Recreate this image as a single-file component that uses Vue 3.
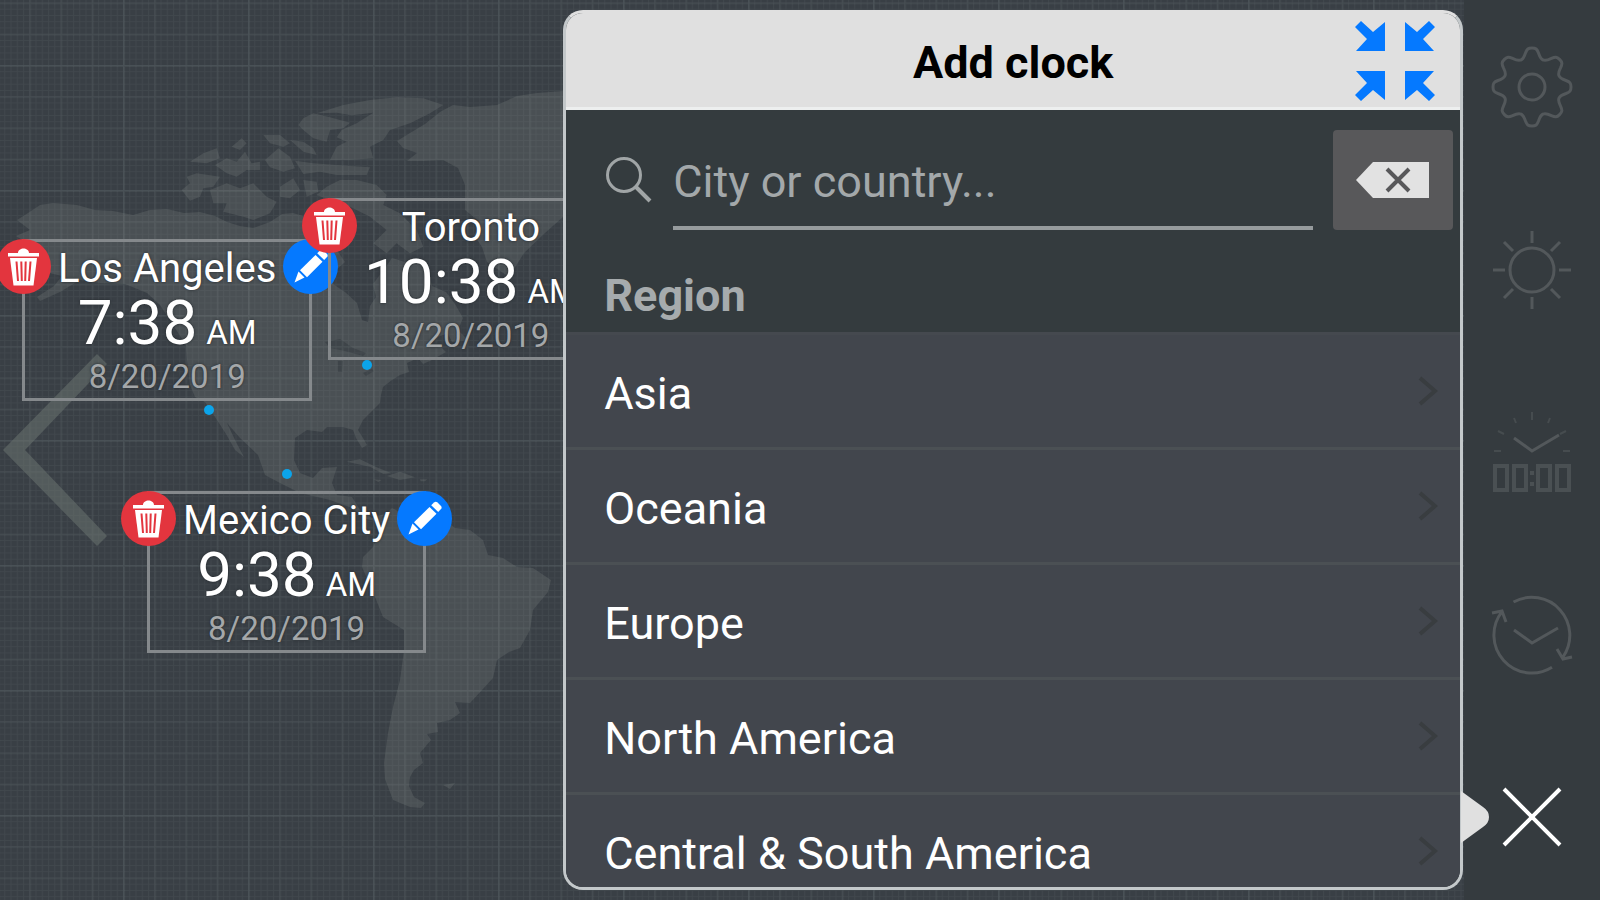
<script setup>
import { ref } from 'vue'

const query = ref('')

const clocks = [
  { city: 'Los Angeles', time: '7:38', left: 22, top: 239 },
  { city: 'Toronto', time: '10:38', left: 328, top: 198 },
  { city: 'Mexico City', time: '9:38', left: 147, top: 491 },
]

const pins = [
  [209, 410],
  [367, 365],
  [287, 474],
]

const regions = ['Asia', 'Oceania', 'Europe', 'North America', 'Central & South America']

function rotate(x, y, turn) {
  const a = (turn * Math.PI) / 4
  const rx = 40 + x * Math.cos(a) - y * Math.sin(a)
  const ry = 40 + x * Math.sin(a) + y * Math.cos(a)
  return `${rx.toFixed(2)} ${ry.toFixed(2)}`
}

function gearOutline() {
  let d = `M${rotate(-11.2, -27, 0)}`
  for (let k = 0; k < 8; k++) {
    const p = (x, y) => rotate(x, y, k)
    d += `C${p(-8.5, -28)} ${p(-7.5, -31)} ${p(-6.5, -34)}`
    d += `C${p(-5, -38)} ${p(-4, -39)} ${p(0, -39)}`
    d += `C${p(4, -39)} ${p(5, -38)} ${p(6.5, -34)}`
    d += `C${p(7.5, -31)} ${p(8.5, -28)} ${p(11.2, -27)}`
  }
  return d + 'Z'
}
const gear = gearOutline()
</script>

<template>
  <div class="app">
    <main class="stage">
      <svg class="map" viewBox="0 0 1464 900" preserveAspectRatio="xMinYMin slice" aria-hidden="true">
        <defs>
          <pattern id="fine" x="-2" y="65" width="6.25" height="6.25" patternUnits="userSpaceOnUse">
            <path d="M.5 0V6.25M0 .5H6.25" class="line-fine" />
          </pattern>
          <pattern id="medium" x="-2" y="65" width="31.25" height="31.25" patternUnits="userSpaceOnUse">
            <path d="M1 0V31.25M0 1H31.25" class="line-medium" />
          </pattern>
          <pattern id="coarse" x="-2" y="65" width="125" height="125" patternUnits="userSpaceOnUse">
            <path d="M1 0V125M0 1H125" class="line-coarse" />
          </pattern>
        </defs>
        <g class="land">
          <path d="M17 220 28 213 40 205 53 203 77 205 95 210 113 211 133 215 150 210 167 209 184 213 200 212 215 216 227 222 240 226 253 228 270 222 282 214 293 213 303 216 318 226 330 240 345 262 336 270 333 284 345 292 357 303 362 320 368 322 370 306 376 297 373 284 385 268 392 258 405 262 418 258 428 270 432 286 446 292 455 304 463 318 458 330 440 336 426 344 440 346 446 352 432 360 423 364 418 358 407 363 409 372 400 375 392 380 383 387 381 395 380 403 370 413 363 420 358 430 363 438 367 445 362 448 356 438 353 430 343 427 327 427 322 432 307 430 295 438 294 460 300 473 313 478 322 468 337 467 332 483 337 495 352 497 360 510 372 518 384 514 380 522 366 519 352 508 330 500 300 493 280 483 265 475 258 455 240 438 227 423 236 442 244 457 235 450 226 434 217 420 205 402 195 397 190 385 187 360 186 345 175 328 160 305 147 293 125 284 100 283 80 280 60 292 40 301 37 297 54 286 62 276 45 272 36 262 24 258 30 245 16 236 30 230Z" />
          <path d="M380 520 392 508 400 512 410 506 425 515 442 517 455 528 470 530 483 540 488 555 503 558 517 567 533 568 551 580 548 592 533 610 530 630 520 648 509 652 497 660 493 678 482 690 470 703 455 702 460 713 450 720 437 723 438 732 427 734 431 740 420 753 423 763 414 770 410 777 409 786 414 797 425 803 421 808 410 807 393 800 385 779 384 763 388 733 393 707 400 680 404 650 404 630 383 617 373 592 362 567 363 557 373 547 379 534Z" />
          <path d="M440 112 453 105 470 107 497 105 517 96 537 93 563 91 620 90 620 190 563 217 545 233 524 253 509 277 487 262 482 247 474 235 480 222 465 210 465 185 458 168 443 160 423 161 407 161 417 153 403 148 397 141 410 133 425 124Z" />
          <g transform="translate(170 80) scale(.3333)">
            <path d="M440 100 520 75 600 60 680 52 760 55 820 75 780 100 720 130 660 150 640 180 600 200 610 235 540 240 480 240 500 200 530 185 500 172 515 150 560 130 610 98 545 106 500 98Z" />
            <path d="M400 115 430 100 480 112 540 128 520 145 480 150 470 185 430 175 400 150 385 135Z" />
            <path d="M375 242 430 250 500 255 600 262 590 285 500 285 450 275 400 282Z" />
            <path d="M280 165 330 165 360 190 340 200 300 190Z M360 180 400 185 430 205 440 225 400 215Z M185 200 215 175 230 190 210 210Z M60 245 100 220 140 205 150 235 110 250Z" />
            <path d="M135 255 170 235 200 245 225 215 245 250 270 245 270 270 230 270 200 290 170 280Z M285 240 325 205 360 230 375 265 340 275 300 262Z" />
            <path d="M35 330 60 310 50 290 80 280 150 290 130 320 100 325 90 350 60 362Z" />
            <path d="M120 330 170 310 210 325 250 310 290 350 320 365 300 400 250 420 220 410 160 395 170 370 130 370Z" />
            <path d="M330 320 370 295 390 330 360 355 330 350Z M400 300 440 305 445 335 410 350Z" />
            <path d="M470 320 510 300 560 300 620 315 650 345 640 375 690 400 740 450 760 500 720 520 680 490 650 520 610 490 650 450 600 410 540 380 480 360 440 345Z" />
          </g>
          <g transform="translate(170 280) scale(.3333)">
            <path d="M530 545 570 538 620 562 665 580 640 582 600 560Z M650 588 690 575 735 592 690 600Z M750 598 772 598 765 604 752 604Z M610 598 635 600 625 606Z" />
          </g>
          <path d="M443 785 455 783 450 789Z M443 324 458 330 468 340 452 342Z" />
        </g>
        <g class="water">
          <path d="M325 342 340 339 353 348 366 353 363 356 345 351 330 348Z M338 361 343 361 342 372 338 372Z M363 373 372 369 374 371 366 376Z" />
        </g>
        <rect width="1464" height="900" fill="url(#fine)" />
        <rect width="1464" height="900" fill="url(#medium)" />
        <rect width="1464" height="900" fill="url(#coarse)" />
        <circle v-for="([x, y], i) in pins" :key="i" :cx="x" :cy="y" r="5" class="pin" />
      </svg>

      <button class="previous" type="button" aria-label="Previous">
        <svg viewBox="0 0 104 192"><path d="M94 0 104 10 22 96 104 182 94 192 0 96Z" /></svg>
      </button>

      <article
        v-for="clock in clocks"
        :key="clock.city"
        class="clock"
        :style="{ left: clock.left + 'px', top: clock.top + 'px' }"
      >
        <h2 class="city">{{ clock.city }}</h2>
        <p class="time"><span>{{ clock.time }}</span><span class="period">AM</span></p>
        <p class="date">8/20/2019</p>
        <button class="badge remove" type="button" :aria-label="'Remove ' + clock.city">
          <svg viewBox="0 0 55 55">
            <path d="M12 14h10c0-3 3-4.500 5.500-4.500s5.500 1.500 5.500 4.500h10v3.500H12z" />
            <path d="M14 19h27l-3.500 27.500h-20z" />
            <path class="slots" d="M20.500 22.500 22 42M25.300 22.500 25.800 42M29.700 22.500 29.200 42M34.500 22.500 33 42" />
          </svg>
        </button>
        <button class="badge edit" type="button" :aria-label="'Edit ' + clock.city">
          <svg viewBox="0 0 55 55">
            <path d="M37 11.500q1.800-1.600 3.300-.2l3.700 3.800q1.300 1.600 0 3l-2.800 2.800-7-6.600z" />
            <path d="M32.500 16l7 6.700-15.500 15.500-7-7z" />
            <path d="M15.500 32.500l6 6-10 5z" />
          </svg>
        </button>
      </article>

      <section class="panel" aria-labelledby="panel-title">
        <header class="panel-head">
          <h1 id="panel-title">Add clock</h1>
          <button class="collapse" type="button" aria-label="Collapse">
            <svg viewBox="0 0 80 80">
              <path d="M0 6 6 0 18 11 30 1V30H1L12 18Z" />
              <path d="M80 6 74 0 62 11 50 1V30H79L68 18Z" />
              <path d="M0 74 6 80 18 69 30 79V50H1L12 62Z" />
              <path d="M80 74 74 80 62 69 50 79V50H79L68 62Z" />
            </svg>
          </button>
        </header>

        <div class="search">
          <label for="query" aria-label="Search">
            <svg viewBox="0 0 47 47"><circle cx="18" cy="18" r="16.500" /><path d="M30 30 44 44" class="handle" /></svg>
          </label>
          <input id="query" v-model="query" type="text" placeholder="City or country..." />
          <button class="clear" type="button" aria-label="Clear">
            <svg viewBox="0 0 74 36">
              <path d="M0 18 17 0H73V36H17Z" />
              <path class="cross" d="M31 7 53 29M53 7 31 29" />
            </svg>
          </button>
        </div>

        <h2 class="group">Region</h2>
        <ul class="regions">
          <li v-for="region in regions" :key="region">
            <button type="button">
              <span>{{ region }}</span>
              <svg viewBox="0 0 20 32"><path d="M2 3 17 16 2 29" /></svg>
            </button>
          </li>
        </ul>
      </section>
      <svg class="pointer" viewBox="0 0 28 52" aria-hidden="true"><path d="M0 0 22 16Q28 20 28 26T22 36L0 52Z" /></svg>
    </main>

    <nav class="tools" aria-label="Tools">
      <button type="button" aria-label="Settings">
        <svg viewBox="0 0 80 80"><path :d="gear" /><circle cx="40" cy="40" r="13" /></svg>
      </button>
      <button type="button" aria-label="Brightness">
        <svg viewBox="0 0 80 80">
          <circle cx="40" cy="40" r="22" />
          <path d="M40 1V13M40 67V79M1 40H13M67 40H79M12 12 21 21M59 59 68 68M68 12 59 21M21 59 12 68" />
        </svg>
      </button>
      <button type="button" aria-label="Clock style">
        <svg viewBox="0 0 80 80">
          <path d="M22 26 40 39 67 23" />
          <path class="thin" d="M2 39H9M71 39H78M6 19 12 22M74 19 68 22M22 6 24 11M58 6 56 11M40 0V8" />
          <path class="digits" d="M3 54H15V78H3ZM22 54H34V78H22ZM46 54H58V78H46ZM65 54H77V78H65ZM40 59V63M40 70V74" />
        </svg>
      </button>
      <button type="button" aria-label="Time travel">
        <svg viewBox="0 0 80 80">
          <path d="M21.500 7A38 38 0 0 1 71 62M65 54 71 64 80 62" />
          <path d="M60 72.300A38 38 0 0 1 10 16.600M0 18 10 16 14 27" />
          <path d="M22 35 40 48 66 33" />
        </svg>
      </button>
      <button class="close" type="button" aria-label="Close">
        <svg viewBox="0 0 80 80"><path d="M12 12 68 68M68 12 12 68" /></svg>
      </button>
    </nav>
  </div>
</template>

<style>
body {
  margin: 0;
  background: #353b3f;
}
</style>

<style scoped>
.app {
  display: flex;
  height: 100vh;
  overflow: hidden;
  font-family: Roboto, "Liberation Sans", sans-serif;
  color: #fff;
}
.app * {
  box-sizing: border-box;
}
h1,
h2,
p,
ul {
  margin: 0;
  padding: 0;
}
button,
input {
  margin: 0;
  padding: 0;
  border: 0;
  background: none;
  color: inherit;
  font: inherit;
}
button {
  cursor: pointer;
}
svg {
  display: block;
}

.stage {
  position: relative;
  display: flex;
  flex: 1;
  justify-content: flex-end;
  min-width: 0;
  padding: 10px 1px 10px 0;
  background: #393f45;
}
.map {
  position: absolute;
  inset: 0;
  width: 100%;
  height: 100%;
}
.land {
  fill: #4a5054;
}
.water {
  fill: #3e4449;
}
.pin {
  fill: #0ca4ea;
}
.line-fine,
.line-medium,
.line-coarse {
  fill: none;
  stroke: #8d9a9b;
}
.line-fine {
  stroke-opacity: 0.09;
}
.line-medium {
  stroke-width: 2;
  stroke-opacity: 0.08;
}
.line-coarse {
  stroke-width: 2;
  stroke-opacity: 0.05;
}

.previous {
  position: absolute;
  left: 3px;
  top: 50%;
  width: 104px;
  transform: translateY(-50%);
}
.previous svg {
  fill: #6a736f;
  fill-opacity: 0.55;
}

.clock {
  position: absolute;
  padding: 0 33px;
  border: 3px solid #85898c;
  text-align: center;
  white-space: nowrap;
  text-shadow: 0 0 3px #24292d;
}
.city {
  font-size: 40px;
  font-weight: 400;
  line-height: 54px;
}
.time {
  display: flex;
  align-items: baseline;
  justify-content: center;
  gap: 9px;
  font-size: 62px;
  line-height: 54px;
}
.period {
  font-size: 33px;
  line-height: 33px;
}
.date {
  margin-top: 6px;
  font-size: 33px;
  line-height: 42px;
  color: #a4a7a9;
}
.badge {
  position: absolute;
  top: -3px;
  width: 55px;
  height: 55px;
  border-radius: 50%;
}
.badge svg {
  fill: #fff;
}
.remove {
  left: -29px;
  background: #e3353e;
}
.edit {
  right: -29px;
  background: #0579ff;
}
.slots {
  fill: none;
  stroke: #e3353e;
  stroke-width: 2;
}

.panel {
  position: relative;
  display: flex;
  flex-direction: column;
  width: 61.5%;
  border: 3px solid #c3c8ca;
  border-top-color: #e0e0e0;
  border-radius: 20px;
  background: #343b3e;
  overflow: hidden;
}
.panel-head {
  display: flex;
  flex: none;
  align-items: center;
  justify-content: center;
  height: 97px;
  border-bottom: 3px solid #edefef;
  background: #e0e0e0;
  color: #000;
}
.panel-head h1 {
  padding-top: 6px;
  font-size: 45px;
  font-weight: 700;
  line-height: 52px;
}
.collapse {
  position: absolute;
  top: 8px;
  right: 25px;
  width: 80px;
}
.collapse svg {
  fill: #0579ff;
}

.search {
  display: flex;
  flex: none;
  gap: 20px;
  height: 120px;
  padding: 20px 7px 0 40px;
}
.search label {
  flex: none;
  width: 47px;
  padding-top: 27px;
}
.search label svg {
  fill: none;
  stroke: #a0a5a6;
  stroke-width: 3;
}
.search label .handle {
  stroke-width: 4;
}
.search input {
  flex: 1;
  min-width: 0;
  padding-top: 6px;
  border-bottom: 4px solid #969b9d;
  border-radius: 0;
  font-size: 45px;
  outline: none;
}
.search input::placeholder {
  color: #a3a8aa;
  opacity: 1;
}
.clear {
  display: flex;
  flex: none;
  align-items: center;
  justify-content: center;
  width: 120px;
  border-radius: 4px;
  background: #58585a;
}
.clear svg {
  width: 74px;
  fill: #e2e2e2;
}
.clear .cross {
  fill: none;
  stroke: #58585a;
  stroke-width: 4;
}
.group {
  flex: none;
  padding: 30px 38px 0;
  font-size: 45px;
  font-weight: 700;
  line-height: 72px;
  color: #a6abad;
}
.regions {
  flex: 1;
  min-height: 0;
  overflow: hidden;
  list-style: none;
  background: #42464d;
}
.regions button {
  display: flex;
  align-items: center;
  justify-content: space-between;
  width: 100%;
  height: 115px;
  padding: 0 22px 0 38px;
  border-top: 3px solid #4b5054;
  text-align: left;
  font-size: 45px;
}
.regions li:first-child button {
  border-top-color: #45494f;
}
.regions span {
  padding-top: 4px;
}
.regions svg {
  width: 20px;
  fill: none;
  stroke: #393d40;
  stroke-width: 4;
}
.pointer {
  position: absolute;
  right: -25px;
  bottom: 57px;
  z-index: 1;
  width: 28px;
  fill: #e0e0e0;
}

.tools {
  display: flex;
  flex: none;
  flex-direction: column;
  align-items: center;
  justify-content: space-between;
  width: 136px;
  padding: 47px 0 43px;
  background: #353b3f;
}
.tools button {
  width: 80px;
  height: 80px;
}
.tools svg {
  fill: none;
  stroke: #53585b;
  stroke-width: 3;
  overflow: visible;
}
.tools .thin {
  stroke: #464c4f;
  stroke-width: 2;
}
.tools .digits {
  stroke: #4a5053;
  stroke-width: 4;
}
.tools .close svg {
  stroke: #fff;
  stroke-width: 4;
}
</style>
